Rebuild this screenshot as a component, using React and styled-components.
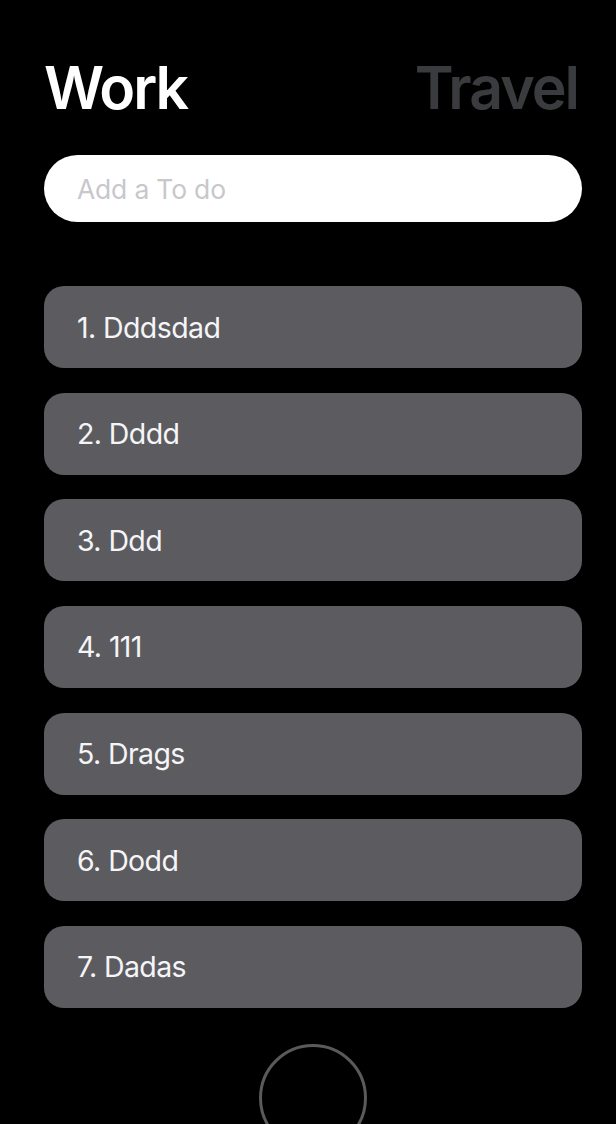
import React from "react";
import styled, { createGlobalStyle } from "styled-components";

const Global = createGlobalStyle`
  html, body { margin: 0; padding: 0; background: #000; height: 100%; overflow: hidden; }
  body { font-family: Inter, "Noto Sans", sans-serif; }
  * { box-sizing: border-box; }
`;

const Screen = styled.div`
  width: 616px;
  height: 1124px;
  background: #000;
  padding: 0 34px 0 44px;
  display: flex;
  flex-direction: column;
  overflow: hidden;
  & > * { flex-shrink: 0; }
`;

const Header = styled.div`
  display: flex;
  justify-content: space-between;
  align-items: baseline;
  margin-top: 52px;
  height: 72px;
  padding-right: 4px;
`;

const Tab = styled.span`
  font-size: 59px;
  font-weight: 600;
  letter-spacing: -2px;
  line-height: 72px;
  color: ${(p) => (p.$active ? "#ffffff" : "#3a3b3e")};
`;

const Input = styled.div`
  margin-top: 31px;
  height: 67px;
  width: 538px;
  border-radius: 34px;
  background: #fff;
  display: flex;
  align-items: center;
  padding-left: 33px;
  font-size: 26.5px;
  color: #c7c7cc;
  letter-spacing: -0.2px;
`;

const List = styled.div`
  margin-top: 64px;
  display: flex;
  flex-direction: column;
  gap: 24.67px;
  width: 538px;
`;

const Card = styled.div`
  height: 82px;
  border-radius: 20px;
  background: #5c5c60;
  display: flex;
  align-items: center;
  padding-left: 33px;
  font-size: 28.5px;
  color: #f5f5f7;
  letter-spacing: -0.6px;
`;

const HomeButton = styled.div`
  margin: 36px auto 0;
  width: 108px;
  height: 108px;
  border-radius: 50%;
  border: 3px solid #5a5a5c;
`;

const todos = ["Dddsdad", "Dddd", "Ddd", "111", "Drags", "Dodd", "Dadas"];

export default function App() {
  return (
    <>
      <Global />
      <Screen>
        <Header>
          <Tab $active>Work</Tab>
          <Tab>Travel</Tab>
        </Header>
        <Input>Add a To do</Input>
        <List>
          {todos.map((t, i) => (
            <Card key={i}>{`${i + 1}. ${t}`}</Card>
          ))}
        </List>
        <HomeButton />
      </Screen>
    </>
  );
}
